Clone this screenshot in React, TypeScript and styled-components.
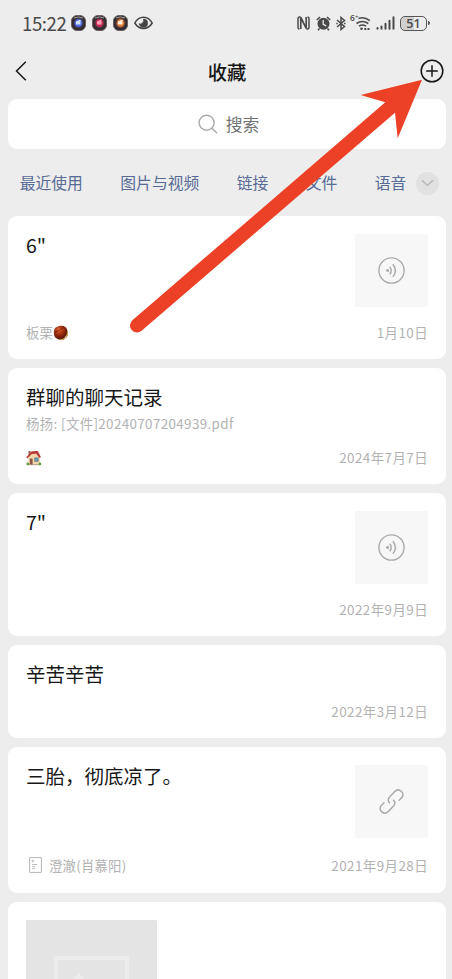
import React from "react";
import styled, { createGlobalStyle } from "styled-components";

const GlobalStyle = createGlobalStyle`
  * { box-sizing: border-box; }
  html, body { margin: 0; overflow: hidden; background: #ededed; }
  svg { display: block; flex: none; }
`;

const Screen = styled.div`
  position: relative;
  width: 452px;
  height: 979px;
  overflow: hidden;
  background: #ededed;
  color: #171717;
  font-family: "Noto Sans CJK SC", sans-serif;
  display: flex;
  flex-direction: column;
`;

const StatusBar = styled.div`
  height: 46px;
  flex: none;
  display: flex;
  justify-content: space-between;
  padding: 0 22px;
  color: #4a4a4a;
`;

const StatusGroup = styled.div<{ $gap: number }>`
  display: flex;
  align-items: center;
  gap: ${(p) => p.$gap}px;
`;

const Clock = styled.span`
  width: 43px;
  font-family: "Noto Sans CJK SC", sans-serif;
  font-size: 18.6px;
  letter-spacing: -0.4px;
  line-height: 46px;
`;

const Battery = styled.div`
  position: relative;
  width: 27px;
  height: 15px;
  margin: 0 3px 0 0;
  border: 1.4px solid #555;
  border-radius: 5px;
  background: linear-gradient(90deg, #d0d0d0 52%, #ededed 52%);
  font: 600 12.5px/13px "Open Sans", sans-serif;
  text-align: center;
  &::after {
    content: "";
    position: absolute;
    right: -4px;
    top: 4px;
    width: 2px;
    height: 4px;
    border-radius: 0 2px 2px 0;
    background: #555;
  }
`;

const NavBar = styled.header`
  height: 53px;
  flex: none;
  display: grid;
  grid-template-columns: 60px 1fr 60px;
  align-items: center;
  padding: 0 8px 3px 14px;
`;

const NavTitle = styled.h1`
  margin: 0;
  padding: 2px 4px 0 0;
  text-align: center;
  font-size: 19.3px;
  line-height: 30px;
  font-weight: 500;
`;

const NavEnd = styled.div`
  display: flex;
  justify-content: flex-end;
`;

const SearchBox = styled.div`
  height: 50px;
  flex: none;
  margin: 0 6px 0 8px;
  border-radius: 9px;
  background: #fff;
  display: flex;
  align-items: center;
  justify-content: center;
  gap: 8px;
  padding-left: 3px;
  color: #737373;
  font-size: 16.8px;
  line-height: 24px;
`;

const Tabs = styled.nav`
  height: 67px;
  flex: none;
  display: flex;
  align-items: center;
  gap: 37.4px;
  padding: 0 0 0 19.7px;
  color: #576b95;
  font-size: 15.8px;
  line-height: 24px;
  white-space: nowrap;
`;

const MoreButton = styled.div`
  width: 23px;
  height: 23px;
  margin-left: -28px;
  margin-top: 1px;
  border-radius: 50%;
  background: #e1e1e1;
  display: grid;
  place-items: center;
`;

const List = styled.main`
  display: flex;
  flex-direction: column;
  gap: 9px;
  padding: 0 6px 0 8px;
`;

const Card = styled.article<{ $height: number; $bottom?: number }>`
  height: ${(p) => p.$height}px;
  flex: none;
  padding: 18px 18px ${(p) => p.$bottom ?? 15}px;
  border-radius: 9px;
  background: #fff;
  display: flex;
  flex-direction: column;
  justify-content: space-between;
`;

const CardBody = styled.div`
  display: flex;
  justify-content: space-between;
`;

const CardTitle = styled.h2`
  margin: -3px 0 0;
  font-size: 19.5px;
  line-height: 28px;
  font-weight: 400;
`;

const CardSummary = styled.p`
  margin: 0;
  color: #b2b2b2;
  font-size: 13.4px;
  line-height: 24px;
  letter-spacing: 0.37px;
`;

const CardFooter = styled.footer`
  height: 24px;
  display: flex;
  align-items: center;
  justify-content: space-between;
  color: #b2b2b2;
  font-size: 13.4px;
  line-height: 24px;
`;

const Source = styled.span`
  display: flex;
  align-items: center;
  letter-spacing: 0.2px;
`;

const DateText = styled.time`
  letter-spacing: 0.45px;
`;

const Thumb = styled.div`
  width: 73px;
  height: 73px;
  border-radius: 1.5px;
  background: #f7f7f7;
  display: grid;
  place-items: center;
`;

const Photo = styled.div`
  width: 131px;
  height: 131px;
  border-radius: 1.5px;
  background: #e4e4e4;
  display: grid;
  place-items: center;
`;

const ArrowOverlay = styled.svg`
  position: absolute;
  left: 0;
  top: 0;
  pointer-events: none;
`;

const AppBadge = ({ id, color, accent }: { id: string; color: string; accent: string }) => (
  <svg width="15" height="16" viewBox="0 0 15 16">
    <defs>
      <radialGradient id={id}>
        <stop offset="0" stopColor={color} />
        <stop offset=".42" stopColor={color} />
        <stop offset=".68" stopColor="#3a3036" />
        <stop offset="1" stopColor="#29262b" />
      </radialGradient>
    </defs>
    <rect x=".5" y=".5" width="14" height="15" rx="5.5" fill={`url(#${id})`} stroke="#6b5f60" />
    <path d="M3 3Q7.500 .8 12 3" fill="none" stroke="#a8a0a0" strokeWidth="1" />
    <path d="M5 9.500V6.500L9.500 4.500v5z" fill={accent} />
  </svg>
);

const EyeIcon = () => (
  <svg width="19" height="14" viewBox="0 0 19 14" fill="none" stroke="#444">
    <path d="M.8 7C5-.8 14-.8 18.200 7 14 14.200 5 14.200.8 7z" strokeWidth="1.500" />
    <path d="M9.500 3a4.200 4.200 0 1 1-4.200 4.600c1.600.9 4.700-.2 4.200-4.600z" fill="#444" strokeWidth=".6" />
  </svg>
);

const NfcSvg = styled.svg`
  margin-right: 1.5px;
`;

const NfcIcon = () => (
  <NfcSvg width="13" height="14" viewBox="0 0 13 14" fill="none" stroke="#4a4a4a">
    <path d="M3.800 1H2.500Q1 1 1 3v8q0 2 1.500 2M9.200 13h1.300q1.500 0 1.500-2V3q0-2-1.500-2" strokeWidth="1.500" />
    <path d="M3.800 13V1.500l5.400 10.800V1" strokeWidth="1.700" />
  </NfcSvg>
);

const AlarmIcon = () => (
  <svg width="15" height="15" viewBox="0 0 15 15">
    <circle cx="7.500" cy="7.800" r="6" fill="#4a4a4a" />
    <path d="M.8 4 4 1M11 1l3.200 3M3.500 12.500l-1.500 1.700M11.500 12.500l1.500 1.700" stroke="#4a4a4a" strokeWidth="1.600" />
    <path d="M7.200 4v4.300l3 1.600" fill="none" stroke="#ededed" strokeWidth="1.300" />
  </svg>
);

const BluetoothIcon = () => (
  <svg width="10" height="15" viewBox="0 0 10 15" fill="none" stroke="#4a4a4a" strokeWidth="1.500">
    <path d="m1 4 7.500 6.500L5 13.500v-12l3.500 3L1 11" />
    <path d="M.3 7.500h1.400M8 7.500h1.500" />
  </svg>
);

const WifiLabel = styled.span`
  width: 7px;
  margin: 13px -8px 0 -1px;
  align-self: flex-start;
  font: 600 8.5px/10px "Open Sans", sans-serif;
  white-space: nowrap;
  sup {
    font-size: 6px;
    line-height: 0;
    vertical-align: 2px;
  }
`;

const WifiIcon = () => (
  <svg width="17" height="15" viewBox="0 0 17 15" fill="none" stroke="#4a4a4a" strokeWidth="1.600">
    <path d="M4.500 2.600Q10 .2 15.800 4.700M2.500 7.500q5.800-4 11.800 0M5 10.200q3.500-2.500 7 0" />
    <circle cx="7.500" cy="12.800" r="1.300" fill="#4a4a4a" stroke="none" />
    <path d="M10.300 13h2M13.500 13h2" strokeWidth="2.200" />
  </svg>
);

const SignalIcon = () => (
  <svg width="19" height="14" viewBox="0 0 19 14" stroke="#4a4a4a" strokeWidth="2" strokeLinecap="round">
    <path d="M1.500 12v.7M5.500 10.400v2.300M9.500 7.800v4.900M13.500 4.700v8M17.500 1.200v11.500" />
  </svg>
);

const BackIcon = () => (
  <svg width="14" height="22" viewBox="0 0 14 22" fill="none" stroke="#171717" strokeWidth="1.500">
    <path d="m11.800 1.800-9.300 9.200 9.300 9.200" />
  </svg>
);

const AddIcon = () => (
  <svg width="24" height="24" viewBox="0 0 24 24" fill="none" stroke="#171717" strokeWidth="1.500">
    <circle cx="12" cy="12" r="10.800" />
    <path d="M12 6.200v11.600M6.200 12h11.600" />
  </svg>
);

const SearchIcon = () => (
  <svg width="20" height="20" viewBox="0 0 20 20" fill="none" stroke="#ababab" strokeWidth="1.400">
    <circle cx="8.600" cy="8.800" r="7.500" />
    <path d="m14 14.200 5 5" />
  </svg>
);

const ChevronIcon = () => (
  <svg width="13" height="8" viewBox="0 0 13 8" fill="none" stroke="#b2b2b2" strokeWidth="1.200">
    <path d="m1 1.300 5.500 5.200L12 1.300" />
  </svg>
);

const VoiceIcon = () => (
  <svg width="27" height="27" viewBox="0 0 27 27" fill="none" stroke="#ababab" strokeWidth="1.400">
    <circle cx="13.500" cy="13.500" r="12.600" />
    <path d="M10.300 12.100 7.900 13.500l2.400 1.400q.7-1.400 0-2.800z" fill="#ababab" strokeWidth=".8" />
    <path d="M11.700 9.800q3.200 3.700 0 7.400M14.900 7.200q4.900 6.300 0 12.600" strokeWidth="1.500" />
  </svg>
);

const LinkIcon = () => (
  <svg width="27" height="27" viewBox="0.5 0.5 27 27" fill="none" stroke="#ababab" strokeWidth="1.500" strokeLinecap="round">
    <path d="M12 15.200c-2-2-1.500-4 .1-5.600l4.900-5.300c2.200-2.300 4.500-2.500 6.700-.6s2.400 4.600.3 6.700l-2.300 2.400" />
    <path d="M16.100 12.900c2 2 1.500 4-.1 5.600l-4.900 5.300c-2.200 2.300-4.500 2.500-6.700.6s-2.400-4.600-.3-6.700l2.400-2.400" />
  </svg>
);

const ChestnutSvg = styled.svg`
  margin-top: 1px;
`;

const ChestnutIcon = () => (
  <ChestnutSvg width="15" height="16" viewBox="0 0 15 16">
    <defs>
      <radialGradient id="chestnut" cx=".38" cy=".3" r=".7">
        <stop offset="0" stopColor="#e57449" />
        <stop offset=".3" stopColor="#b83f17" />
        <stop offset=".8" stopColor="#751c04" />
        <stop offset="1" stopColor="#4e1304" />
      </radialGradient>
    </defs>
    <path d="M3.500 13.500Q9 17.500 13.500 12.500T14.500 5l-2 7z" fill="#c49b50" />
    <path d="M1 9C.4 5.500 1.600 2.500 4 2.100 7-.2 13 .4 14 4.500c.7 3.700-1 8-5 9.300C5 15.500 1 12.500 1 9z" fill="url(#chestnut)" />
    <path d="M2 7.200Q7.500 5.800 10.500 1.600" fill="none" stroke="#6f1804" strokeWidth=".8" />
  </ChestnutSvg>
);

const HouseSvg = styled.svg`
  margin-top: 2px;
`;

const HouseIcon = () => (
  <HouseSvg width="16" height="16" viewBox="0 0 16 16">
    <path d="M2.500 1h2.200v4H2.500z" fill="#9b6654" />
    <path d="M2.300 7 6.300 3l7.500 2v9.800H2.300z" fill="#f1d6aa" />
    <path d="m.3 7.300 5.500-6L11.800 1l3.200 6.300-1.700.4-3-3.900-4.500.1-4.500 4.500z" fill="#b83935" />
    <path d="M3.800 8.500h2.800v6H3.800z" fill="#8c5544" />
    <path d="M8.600 7.800h3.700v3.700H8.600z" fill="#529dc3" stroke="#8b6d5e" strokeWidth=".5" />
    <path d="M2 14.700h12" stroke="#8b6d5e" strokeWidth=".6" />
    <circle cx="1.800" cy="13.900" r="1.400" fill="#5d9d3c" />
    <circle cx="13.900" cy="13.900" r="1.400" fill="#5d9d3c" />
  </HouseSvg>
);

const NoteIcon = styled.svg`
  margin: 0 7px 0 3px;
`;

const SourceNote = () => (
  <NoteIcon width="13" height="16" viewBox="0 0 13 16" fill="none" stroke="#b5b5b5">
    <rect x=".6" y=".6" width="11.800" height="14.800" rx=".4" />
    <path d="M2.600 4h2.600M3.900 2.700v2.600M3 7.500h5M3 9.600h3M3 11.600h3" strokeWidth=".9" />
  </NoteIcon>
);

const PictureIcon = () => (
  <svg width="75" height="59" viewBox="0 0 75 59">
    <rect x="2" y="2" width="71" height="55" fill="none" stroke="#ececec" strokeWidth="4" />
    <path d="M4 39 25 17l17 18 10-8 19 20v8H4z" fill="#ececec" />
  </svg>
);

const AnnotationArrow = () => (
  <ArrowOverlay width="452" height="979" viewBox="0 0 452 979">
    <path
      d="M422 79.700 360.700 95l24.600 7.300L132.400 320.200A7 7 0 0 0 141.600 330.800L395 112.700l2.700 25.600z"
      fill="#ec4126"
    />
  </ArrowOverlay>
);

type Favorite = {
  title: string;
  height: number;
  bottom?: number;
  date: string;
  summary?: string;
  thumb?: React.ReactNode;
  source?: React.ReactNode;
};

const favorites: Favorite[] = [
  { title: '6"', height: 143, date: "1月10日", thumb: <VoiceIcon />, source: <>板栗<ChestnutIcon /></> },
  { title: "群聊的聊天记录", height: 116, date: "2024年7月7日", summary: "杨扬: [文件]20240707204939.pdf", source: <HouseIcon /> },
  { title: '7"', height: 143, date: "2022年9月9日", thumb: <VoiceIcon /> },
  { title: "辛苦辛苦", height: 93, date: "2022年3月12日" },
  { title: "三胎，彻底凉了。", height: 146, bottom: 16, date: "2021年9月28日", thumb: <LinkIcon />, source: <><SourceNote />澄澈(肖慕阳)</> },
];

export default function App() {
  return (
    <>
      <GlobalStyle />
      <Screen>
        <StatusBar>
          <StatusGroup $gap={6}>
            <Clock>15:22</Clock>
            <StatusGroup $gap={6}>
              <AppBadge id="blueBadge" color="#4e6bea" accent="#d5e1ff" />
              <AppBadge id="redBadge" color="#d42958" accent="#ff9eb5" />
              <AppBadge id="orangeBadge" color="#ee7a31" accent="#fff0df" />
              <EyeIcon />
            </StatusGroup>
          </StatusGroup>
          <StatusGroup $gap={5}>
            <NfcIcon />
            <AlarmIcon />
            <BluetoothIcon />
            <WifiLabel>6<sup>+</sup></WifiLabel>
            <WifiIcon />
            <SignalIcon />
            <Battery>51</Battery>
          </StatusGroup>
        </StatusBar>
        <NavBar>
          <BackIcon />
          <NavTitle>收藏</NavTitle>
          <NavEnd><AddIcon /></NavEnd>
        </NavBar>
        <SearchBox><SearchIcon />搜索</SearchBox>
        <Tabs>
          {["最近使用", "图片与视频", "链接", "文件", "语音"].map((label) => (
            <span key={label}>{label}</span>
          ))}
          <MoreButton><ChevronIcon /></MoreButton>
        </Tabs>
        <List>
          {favorites.map((item) => (
            <Card key={item.title} $height={item.height} $bottom={item.bottom}>
              <CardBody>
                <div>
                  <CardTitle>{item.title}</CardTitle>
                  {item.summary && <CardSummary>{item.summary}</CardSummary>}
                </div>
                {item.thumb && <Thumb>{item.thumb}</Thumb>}
              </CardBody>
              <CardFooter>
                <Source>{item.source}</Source>
                <DateText>{item.date}</DateText>
              </CardFooter>
            </Card>
          ))}
          <Card $height={190}>
            <Photo><PictureIcon /></Photo>
          </Card>
        </List>
        <AnnotationArrow />
      </Screen>
    </>
  );
}
